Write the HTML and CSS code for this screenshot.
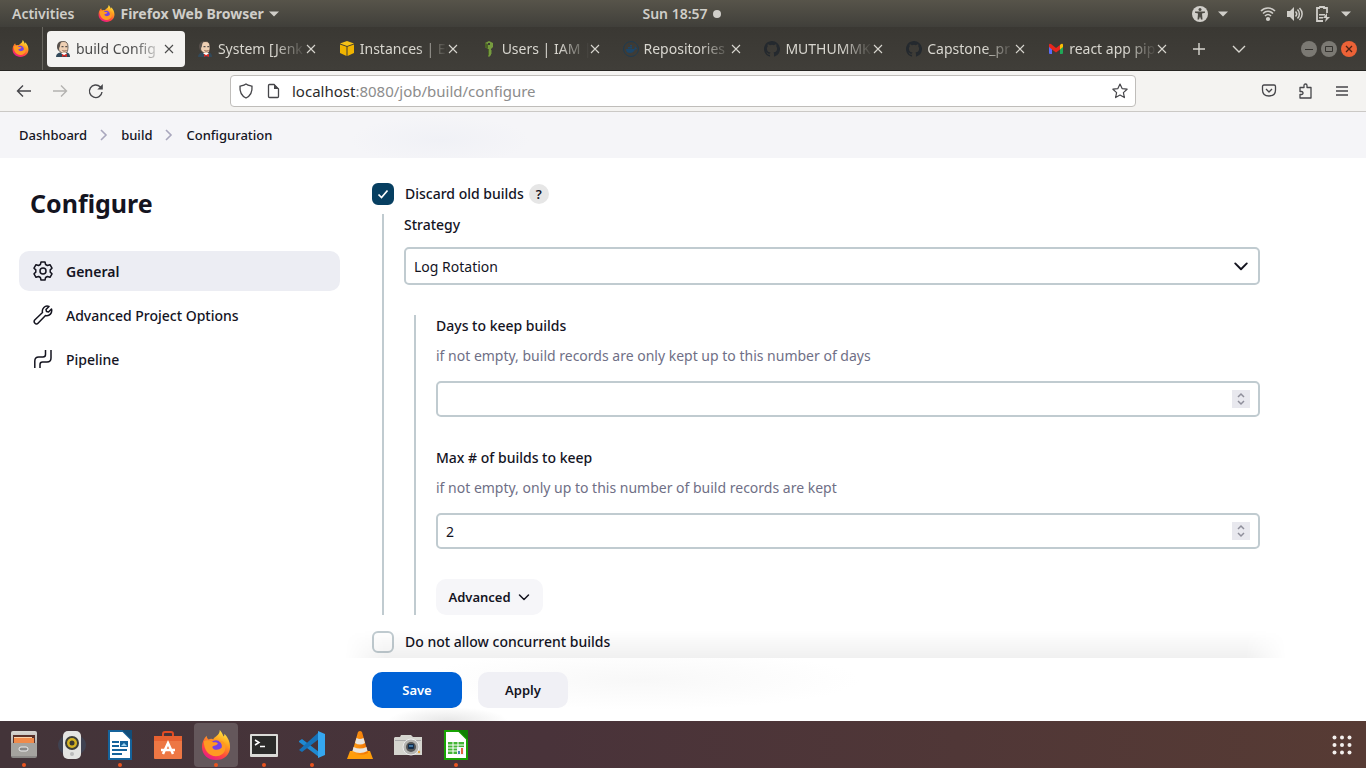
FILE: index.html
```html
<!DOCTYPE html>
<html lang="en">
<head>
<meta charset="utf-8">
<title>build Config [Jenkins]</title>
<link rel="stylesheet" href="styles.css">
</head>
<body>
<svg class="defs" aria-hidden="true">
  <defs>
    <linearGradient id="flame" x1="0.8" y1="0" x2="0.3" y2="1"><stop offset="0" stop-color="#fff04a"/><stop offset=".35" stop-color="#ffa51e"/><stop offset=".7" stop-color="#ff4a3c"/><stop offset="1" stop-color="#e8188a"/></linearGradient>
    <linearGradient id="cabinet" x1="0" y1="0" x2="0" y2="1"><stop offset="0" stop-color="#d8d6d2"/><stop offset="1" stop-color="#888684"/></linearGradient>
    <linearGradient id="orangeCone" x1="0" y1="0" x2="1" y2="0"><stop offset="0" stop-color="#ffa019"/><stop offset="1" stop-color="#f07000"/></linearGradient>
    <symbol id="firefox" viewBox="0 0 32 32">
      <path fill="url(#flame)" d="M20 0c2 2 3 4 4 7 1-1 1-2 1-3 4 4 6 9 6 14 0 8-6.500 14-15 14S1 26 1 18c0-5 2-9 5-12 0 2 1 3 2 4 2-1 4-1 5 0 1-3 7-4 7-10z"/>
      <circle cx="16" cy="18" r="7" fill="#7542e5"/>
      <path fill="#ff9a22" d="M3 12c3-2 7-1 10 1 2 0 4 0 5 1-1 3-5 2-6 4 1 4 7 4 10 1 1-4-1-6-4-8 5 0 9 3 8 9-1 5-5 8-10 8C8 28 3 21 3 12z"/>
    </symbol>
    <symbol id="jenkins" viewBox="0 0 16 16">
      <path fill="#32495a" d="M1 16c0-3 2-4.500 5-4.500h5c3 0 4 2 4 4.500z"/>
      <path fill="#efd0b4" stroke="#3a302c" stroke-width=".7" d="M4 4c0-3 2-3.500 5-3.500S13 3 13 6c0 4-1 6.500-4 6.500S4 10 3.500 8C2.500 7 3 6 4 6z"/>
      <path fill="#57504c" d="M3.500 10C2 8 1.500 5 2.500 3 3.500 1 5 .3 7.500.3 5 1.500 5.500 4 4.500 6zM6.500 5h2v1.300h-2zM10.300 5h2v1.300h-2z"/>
      <path fill="none" stroke="#7b4d3d" d="M7.500 9.500c1 .8 2.500.8 4 0"/>
      <path fill="#fff" d="M6 12l3 3 3-3z"/>
      <path fill="#d82a25" d="M7 13l2 1 3-1v3l-3-1-2 1z"/>
    </symbol>
    <symbol id="github" viewBox="0 0 16 16"><path fill="#24292e" d="M8 0C3.580 0 0 3.580 0 8c0 3.540 2.290 6.530 5.470 7.590.4.070.55-.17.55-.38v-1.500c-2.200.5-2.700-.9-2.700-.9-.36-.92-.9-1.200-.9-1.200-.72-.5.060-.48.060-.48.8.06 1.220.82 1.220.82.71 1.220 1.870.87 2.330.66.070-.52.280-.87.500-1.070-1.770-.2-3.640-.9-3.640-3.950 0-.9.310-1.600.82-2.150-.1-.2-.36-1 .08-2.120 0 0 .67-.21 2.200.82a7.600 7.600 0 0 1 4 0c1.530-1.040 2.200-.82 2.200-.82.440 1.100.160 1.900.080 2.120.510.560.820 1.270.820 2.150 0 3.070-1.870 3.750-3.650 3.950.290.250.540.730.540 1.480v2.200c0 .2.150.46.550.38A8 8 0 0 0 8 0z"/></symbol>
    <symbol id="close" viewBox="0 0 10 10"><path d="M1 1l8 8M9 1L1 9" fill="none" stroke="currentColor" stroke-width="1.100"/></symbol>
    <symbol id="caret" viewBox="0 0 10 6"><path d="M0 .5h10L5 5.500z" fill="currentColor"/></symbol>
    <symbol id="chevron" viewBox="0 0 14 14"><path d="M2.500 5L7 9.500 11.500 5" fill="none" stroke="currentColor" stroke-width="1.500" stroke-linecap="round" stroke-linejoin="round"/></symbol>
    <symbol id="crumb" viewBox="0 0 10 14"><path d="M2 2l5 5-5 5" fill="none" stroke="#a9a7bd" stroke-width="1.600"/></symbol>
    <symbol id="spin" viewBox="0 0 18 18"><path d="M6 7l3-3 3 3M6 11l3 3 3-3" fill="none" stroke="#8f8f9b" stroke-width="1.500"/></symbol>
  </defs>
</svg>

<header class="panel">
  <div class="panel-side">
    <button class="panel-item">Activities</button>
    <button class="panel-item app-menu"><svg width="17" height="17"><use href="#firefox"/></svg>Firefox Web Browser<svg width="10" height="6"><use href="#caret"/></svg></button>
  </div>
  <button class="panel-item clock">Sun 18:57<span class="dot"></span></button>
  <div class="panel-side status">
    <svg width="16" height="16" viewBox="0 0 16 16"><circle cx="8" cy="8" r="8" fill="#d0cec9"/><circle cx="8" cy="3.500" r="1.500" fill="#4b4943"/><path d="M3 5.500l10 0v1.300l-3 .6.500 6H9L8 10.500 7 13.500H5.500l.5-6-3-.7z" fill="#4b4943"/></svg>
    <svg width="10" height="6"><use href="#caret"/></svg>
    <svg class="wifi" width="16" height="16" viewBox="0 0 16 16" fill="none" stroke="#d0cec9" stroke-width="1.600"><path d="M1 5c4-4 10-4 14 0M3 7.500c3-3 7-3 10 0M5 10c2-2 4-2 6 0"/><circle cx="8" cy="13" r="1.300" fill="#d0cec9"/></svg>
    <svg class="sound" width="17" height="16" viewBox="0 0 17 16" fill="none" stroke="#d0cec9" stroke-width="1.500"><path fill="#d0cec9" stroke="none" d="M1 5h3l4-4v14l-4-4H1z"/><path d="M9.500 5.500c1.500 1.500 1.500 3.500 0 5M11.500 3.500c2.500 2.500 2.500 6.500 0 9M13.500 2c3.500 3.500 3.500 8.500 0 12"/></svg>
    <svg class="battery" width="16" height="16" viewBox="0 0 16 16"><path d="M5 2V1h4v1h3v5M8 15H2V2h3" fill="none" stroke="#d0cec9" stroke-width="1.800"/><path d="M4 8h6v1.500H4zM4 11h4v1.500H4zM12 7l-4 5h3l-1 4 5-5h-3z" fill="#d0cec9"/></svg>
    <svg width="10" height="6"><use href="#caret"/></svg>
  </div>
</header>

<nav class="tabbar" aria-label="Tabs">
  <div class="pinned"><svg width="17" height="17"><use href="#firefox"/></svg></div>
  <div class="tabs">
    <div class="tab active"><svg width="16" height="16"><use href="#jenkins"/></svg><span>build Config</span><button aria-label="Close tab"><svg width="10" height="10"><use href="#close"/></svg></button></div>
    <div class="tab"><svg width="16" height="16"><use href="#jenkins"/></svg><span>System [Jenk</span><button aria-label="Close tab"><svg width="10" height="10"><use href="#close"/></svg></button></div>
    <div class="tab"><svg width="16" height="16" viewBox="0 0 16 16"><path fill="#f5c218" d="M8 0l7 2.500L8 5 1 2.500z"/><path fill="#f0b400" d="M1 3.500l6.500 2.300V15L1 12zM15 3.500L8.500 5.800V15L15 12z"/></svg><span>Instances | EC</span><button aria-label="Close tab"><svg width="10" height="10"><use href="#close"/></svg></button></div>
    <div class="tab"><svg width="16" height="16" viewBox="0 0 16 16"><path fill="#769b3f" fill-rule="evenodd" d="M4 2l4-2 4 2v4l-2 2v1l1 1-1 1 1 1-1 1v1l-2 2-1-1V8L4 6zm3 0v2h2V2z"/><path fill="#4b6225" d="M4 2l3 1v5L4 6zM8 8v7l-1-1V8z"/></svg><span>Users | IAM |</span><button aria-label="Close tab"><svg width="10" height="10"><use href="#close"/></svg></button></div>
    <div class="tab"><svg width="16" height="16" viewBox="0 0 16 16"><circle cx="8" cy="8" r="7.500" fill="none" stroke="#203b50"/><path fill="#1d4668" d="M3 8h8c1-1 1-2 .5-3 1 .5 1.500 1 1.500 2h1c0 1-1 1.500-2 1.500C11 11 9 12 7 12S3 11 3 8zM5 6h4v1.500H5zM7 4h2v1.500H7z"/></svg><span>Repositories</span><button aria-label="Close tab"><svg width="10" height="10"><use href="#close"/></svg></button></div>
    <div class="tab"><svg width="16" height="16"><use href="#github"/></svg><span>MUTHUMMK</span><button aria-label="Close tab"><svg width="10" height="10"><use href="#close"/></svg></button></div>
    <div class="tab"><svg width="16" height="16"><use href="#github"/></svg><span>Capstone_pr</span><button aria-label="Close tab"><svg width="10" height="10"><use href="#close"/></svg></button></div>
    <div class="tab"><svg width="16" height="16" viewBox="0 0 16 16"><path fill="#5a6cf5" d="M1 5l3 2v6H2q-1 0-1-1z"/><path fill="#20a757" d="M15 5l-3 2v6h2q1 0 1-1z"/><path fill="#fbbc04" d="M12 4l1-1q2-1 2 1v2l-3 2.500z"/><path fill="#e8261c" d="M1 4q0-2 2-1l5 4 4-3v4.500L8 11.500 4 8.500 1 6z"/></svg><span>react app pip</span><button aria-label="Close tab"><svg width="10" height="10"><use href="#close"/></svg></button></div>
  </div>
  <button class="tab-tool" aria-label="New tab"><svg width="12" height="12" viewBox="0 0 12 12"><path d="M6 0v12M0 6h12" stroke="currentColor" stroke-width="1.400"/></svg></button>
  <button class="tab-tool tab-list" aria-label="List all tabs"><svg width="14" height="8" viewBox="0 0 14 8"><path d="M1 1l6 6 6-6" fill="none" stroke="currentColor" stroke-width="1.400"/></svg></button>
  <div class="window-controls">
    <button aria-label="Minimize"><svg width="8" height="8" viewBox="0 0 8 8"><path d="M0 4.500h8" stroke="#35332f"/></svg></button>
    <button aria-label="Maximize"><svg width="8" height="8" viewBox="0 0 8 8"><path d="M.5 1.500h7v5h-7z" fill="none" stroke="#35332f"/></svg></button>
    <button class="quit" aria-label="Close"><svg width="8" height="8" viewBox="0 0 8 8"><path d="M1 1l6 6M7 1L1 7" stroke="#4c2315" stroke-width="1.300"/></svg></button>
  </div>
</nav>

<div class="toolbar">
  <div class="nav-buttons">
    <button aria-label="Back"><svg width="16" height="16" viewBox="0 0 16 16"><path d="M15 8H2M7 2.500L1.500 8 7 13.500" fill="none" stroke="currentColor" stroke-width="1.400"/></svg></button>
    <button class="disabled" aria-label="Forward"><svg width="16" height="16" viewBox="0 0 16 16"><path d="M1 8h13M9 2.500L14.500 8 9 13.500" fill="none" stroke="currentColor" stroke-width="1.400"/></svg></button>
    <button aria-label="Reload"><svg width="16" height="16" viewBox="0 0 16 16"><path d="M14 9a6.300 6.300 0 1 1-1.800-5.200l1.300 1.400" fill="none" stroke="currentColor" stroke-width="1.400"/><path d="M14.800 1v5.500H9.300z" fill="currentColor"/></svg></button>
  </div>
  <div class="urlbar">
    <svg width="16" height="16" viewBox="0 0 16 16"><path d="M8 1c2 1.500 4 1.700 6 2.200C14.500 9 12 13 8 15 4 13 1.500 9 2 3.200 4 2.700 6 2.500 8 1z" fill="none" stroke="currentColor" stroke-width="1.300"/></svg>
    <svg width="16" height="16" viewBox="0 0 16 16"><path d="M9 1.500H4.500q-1 0-1 1v11q0 1 1 1h8q1 0 1-1V6z" fill="none" stroke="currentColor" stroke-width="1.300"/><path d="M9 1l5 5H9z" fill="currentColor"/></svg>
    <a class="url" href="#"><b>localhost</b>:8080/job/build/configure</a>
    <button aria-label="Bookmark"><svg width="16" height="16" viewBox="0 0 16 16"><path d="M8 1l2.100 4.600 5 .6-3.700 3.400 1 5L8 12.100l-4.400 2.500 1-5L.9 6.200l5-.6z" fill="none" stroke="currentColor" stroke-width="1.200" stroke-linejoin="round"/></svg></button>
  </div>
  <div class="tool-buttons">
    <button aria-label="Save to Pocket"><svg width="16" height="16" viewBox="0 0 16 16" fill="none" stroke="currentColor" stroke-width="1.300"><path d="M3 2h10q1.500 0 1.500 1.500V7q0 6-6.500 6T1.500 7V3.500Q1.500 2 3 2zM5 6l3 3 3-3" stroke-linejoin="round"/></svg></button>
    <button aria-label="Extensions"><svg width="16" height="16" viewBox="0 0 16 16"><path d="M2 4.500h4V2.500q0-1.500 1.500-1.500T9 2.500v2h4V15H2v-3.500h1.500Q5 11.500 5 10T3.500 8.500H2z" fill="none" stroke="currentColor" stroke-width="1.300" stroke-linejoin="round"/></svg></button>
    <button aria-label="Menu"><svg width="14" height="14" viewBox="0 0 14 14"><path d="M1 3h12M1 7h12M1 11h12" stroke="currentColor" stroke-width="1.400"/></svg></button>
  </div>
</div>

<div class="page">
  <nav class="breadcrumbs" aria-label="Breadcrumb">
    <a href="#">Dashboard</a><svg width="10" height="14"><use href="#crumb"/></svg><a href="#">build</a><svg width="10" height="14"><use href="#crumb"/></svg><a href="#">Configuration</a>
  </nav>
  <div class="columns">
    <aside class="sidebar">
      <h1>Configure</h1>
      <nav>
        <a class="current" href="#"><svg width="20" height="20" viewBox="0 0 20 20" fill="none" stroke="currentColor" stroke-width="1.500" stroke-linejoin="round"><path d="M8 1h4l.6 2.500 1.800 1L17 3.700l2 3.500-1.800 1.700v2.200L19 12.800l-2 3.500-2.600-.8-1.800 1L12 19H8l-.6-2.500-1.800-1-2.600.8-2-3.500 1.800-1.700V8.900L1 7.200l2-3.500 2.600.8 1.800-1z"/><circle cx="10" cy="10" r="3"/></svg>General</a>
        <a href="#"><svg width="20" height="20" viewBox="0 0 20 20" fill="none" stroke="currentColor" stroke-width="1.500" stroke-linejoin="round"><path d="M16 1.500l-3 3 .5 2 2 .5 3-3c1 4-2 7.500-6 6.500L5 18.300c-2 2-5-1-3.300-3.300L9.500 7.500C8.500 3.500 12 0 16 1.500z"/></svg>Advanced Project Options</a>
        <a href="#"><svg width="20" height="20" viewBox="0 0 20 20" fill="none" stroke="currentColor" stroke-width="1.500"><path d="M1.800 19v-7q0-4 4-4H10q2.500 0 2.500-2.500V1M7 19v-3.500q0-2.500 2.500-2.500H14q4 0 4-4V1"/></svg>Pipeline</a>
      </nav>
    </aside>
    <main>
      <form>
        <div class="check-row"><input type="checkbox" id="discard" checked><label for="discard">Discard old builds</label><button type="button" class="help" aria-label="Help">?</button></div>
        <div class="nested">
          <label for="strategy">Strategy</label>
          <div class="field select"><select id="strategy"><option>Log Rotation</option></select><svg width="18" height="18"><use href="#chevron"/></svg></div>
          <div class="nested">
            <label for="days">Days to keep builds</label>
            <p>if not empty, build records are only kept up to this number of days</p>
            <div class="field"><input type="number" id="days"><svg width="18" height="18"><use href="#spin"/></svg></div>
            <label for="max">Max # of builds to keep</label>
            <p>if not empty, only up to this number of build records are kept</p>
            <div class="field"><input type="number" id="max" value="2"><svg width="18" height="18"><use href="#spin"/></svg></div>
            <button type="button" class="btn advanced">Advanced<svg width="14" height="14"><use href="#chevron"/></svg></button>
          </div>
        </div>
        <div class="check-row"><input type="checkbox" id="concurrent"><label for="concurrent">Do not allow concurrent builds</label></div>
      </form>
      <footer>
        <button class="btn primary">Save</button>
        <button class="btn apply">Apply</button>
      </footer>
    </main>
  </div>
</div>

<nav class="dock" aria-label="Dock">
  <button class="running" aria-label="Files"><svg width="30" height="30" viewBox="0 0 30 30"><rect x="2" y="1" width="26" height="27" rx="2" fill="url(#cabinet)"/><path fill="#59312a" d="M4 5h22v8H4z"/><path fill="#f08a4a" d="M5 8h20v5H5z"/><path fill="#f9d1a9" d="M5 7h18v1H5z"/><path fill="#a5a39f" d="M2 13h26v13H2z"/><rect x="10" y="17" width="9" height="4" rx="2" fill="#888" stroke="#eee"/></svg></button>
  <button aria-label="Rhythmbox"><svg width="30" height="30" viewBox="0 0 30 30"><ellipse cx="15" cy="15" rx="14" ry="11" fill="#404251"/><rect x="6" y="1" width="18" height="28" rx="5" fill="#e4e4e2"/><circle cx="15" cy="13" r="7" fill="#3d3d38"/><circle cx="15" cy="13" r="5" fill="#d5b322"/><circle cx="15" cy="13" r="2.500" fill="#3b3932"/><circle cx="15" cy="24" r="2" fill="#bbb"/></svg></button>
  <button class="running" aria-label="Writer"><svg width="30" height="30" viewBox="0 0 30 30"><path d="M4 1h14l8 8v20H4z" fill="#fff" stroke="#15639b" stroke-width="2"/><path d="M17 0h10v10z" fill="#124d78"/><path d="M7 12h7M7 16h7M7 20h15M7 24h10" stroke="#15639b" stroke-width="2"/><path d="M15 11h8v6h-8z" fill="#15639b"/><path d="M16 16l3-3 3 3z" fill="#9fd3ef"/></svg></button>
  <button aria-label="Software"><svg width="30" height="30" viewBox="0 0 30 30"><path d="M10 8V4q0-2 2-2h6q2 0 2 2v4" fill="none" stroke="#e24b23" stroke-width="2"/><path d="M1 6h28v22q0 1-1 1H2q-1 0-1-1z" fill="#ed7744"/><path d="M1 6h28v5H1z" fill="#e76131"/><path d="M10 24l5-11 5 11M8 20h14" fill="none" stroke="#fff" stroke-width="2.500"/></svg></button>
  <button class="running focused" aria-label="Firefox"><svg width="30" height="30"><use href="#firefox"/></svg></button>
  <button class="running" aria-label="Terminal"><svg width="30" height="30" viewBox="0 0 30 30"><rect x="1" y="4" width="28" height="23" rx="1" fill="#dbdbd8"/><rect x="3" y="6" width="24" height="18" fill="#2b2b2a"/><path d="M6 10l4 2.500-4 2.500M11 16.500h5" fill="none" stroke="#fff" stroke-width="1.500"/></svg></button>
  <button class="running" aria-label="Visual Studio Code"><svg width="30" height="30" viewBox="0 0 30 30"><path d="M2 11l3-2 17 13v5L2 12z" fill="#1f8ad2"/><path d="M2 20l3 2L22 9V2z" fill="#1672b8"/><path d="M21 1l7 3v21l-7 3z" fill="#35a7f0"/></svg></button>
  <button aria-label="VLC"><svg width="30" height="30" viewBox="0 0 30 30"><path d="M5 21h20l3 8H2z" fill="#ff9d0a"/><path d="M13 2q2-2 4 0l6 21q-8 4-16 0z" fill="url(#orangeCone)"/><path d="M11.500 8q3.500 2 7 0l1.500 5q-5 3-10 0zM8.500 17q6.500 3 13 0l1 4q-7.500 4-15 0z" fill="#e8e5df"/></svg></button>
  <button aria-label="Shotwell"><svg width="30" height="30" viewBox="0 0 30 30"><path d="M2 7h5l1-2h10l2 2h9v18H1V8z" fill="#d5d5cf"/><path d="M2 10h26v1H2z" fill="#aaa"/><circle cx="18" cy="17" r="8" fill="#b5b5b2" stroke="#eee"/><circle cx="18" cy="17" r="5" fill="#555"/><rect x="15" y="14" width="6" height="5" rx="1" fill="#122c4b"/><path d="M16 15h4v2h-4z" fill="#40739d"/><circle cx="26" cy="22" r="1.200" fill="#e9a538"/></svg></button>
  <button class="running" aria-label="Calc"><svg width="30" height="30" viewBox="0 0 30 30"><path d="M4 1h14l8 8v20H4z" fill="#fff" stroke="#18a303" stroke-width="2"/><path d="M17 0h10v10z" fill="#0e8002"/><path d="M7 12h16v12H7z" fill="#42b535"/><path d="M7 15h16M7 18h9M7 21h9M12 12v12M17 12v5" stroke="#fff"/><path d="M16 17h7v8h-7z" fill="#eef5f8"/><path d="M17 24v-3h2v3z" fill="#487eb0"/><path d="M20 24v-6h2v6z" fill="#e0653a"/></svg></button>
  <button class="apps" aria-label="Show applications"><svg width="20" height="20" viewBox="0 0 20 20" fill="#f4f0ee"><circle cx="2.500" cy="2.500" r="2"/><circle cx="10" cy="2.500" r="2"/><circle cx="17.500" cy="2.500" r="2"/><circle cx="2.500" cy="10" r="2"/><circle cx="10" cy="10" r="2"/><circle cx="17.500" cy="10" r="2"/><circle cx="2.500" cy="17.500" r="2"/><circle cx="10" cy="17.500" r="2"/><circle cx="17.500" cy="17.500" r="2"/></svg></button>
</nav>
</body>
</html>
```
FILE: styles.css
```css
* { box-sizing: border-box; }
body {
  margin: 0;
  min-height: 100vh;
  display: flex;
  flex-direction: column;
  font-family: "Noto Sans", "Open Sans", sans-serif;
  font-size: 14px;
  color: #14141f;
  background: #fff;
}
button { font: inherit; color: inherit; border: 0; background: none; padding: 0; }
a { color: inherit; text-decoration: none; }
svg { display: block; flex: none; }
.defs { position: absolute; width: 0; height: 0; }

/* Desktop panel */
.panel {
  display: flex;
  align-items: center;
  height: 27px;
  padding: 0 15px 0 12px;
  color: #d0cec9;
  font-size: 14px;
  font-weight: 600;
  line-height: 20px;
  background: linear-gradient(#57544a, #403f3a);
}
.panel-side { flex: 1; display: flex; align-items: center; gap: 24px; }
.app-menu { font-weight: 700; }
.panel-item { display: flex; align-items: center; gap: 5px; white-space: nowrap; }
.dot { width: 8px; height: 8px; border-radius: 50%; background: currentColor; }
.status { justify-content: flex-end; gap: 10px; }
.wifi { margin-left: 22px; }
.battery { margin-left: 2px; }

/* Browser tabs */
.tabbar {
  display: flex;
  align-items: center;
  height: 44px;
  color: #d8d6cf;
  background: linear-gradient(#3a3833, #403e39);
  border-bottom: 1px solid #262522;
}
.pinned { width: 43px; align-self: stretch; display: flex; align-items: center; padding-left: 12px; border-right: 1px solid #68665f; }
.tabs { flex: 1; display: flex; gap: 4px; margin: 0 3px 0 4px; min-width: 0; }
.tab { flex: 1; min-width: 0; height: 36px; display: flex; align-items: center; padding: 0 11px 0 8px; border-radius: 4px; font-size: 14px; }
.tab span {
  flex: 1;
  margin-left: 5px;
  overflow: hidden;
  white-space: nowrap;
  -webkit-mask-image: linear-gradient(90deg, #000 65%, transparent);
  mask-image: linear-gradient(90deg, #000 65%, transparent);
}
.tab.active { color: #4b4b4b; background: #f4f3f1; }
.tab-tool { width: 36px; display: flex; justify-content: center; }
.tab-list { width: 44px; }
.window-controls { display: flex; gap: 4px; margin: 0 9px 0 40px; }
.window-controls button { width: 16px; height: 16px; border-radius: 50%; display: flex; align-items: center; justify-content: center; background: #7b7973; }
.window-controls .quit { background: #ec6237; }

/* Address bar */
.toolbar { display: flex; align-items: center; height: 41px; color: #46464a; background: #f4f3f1; border-bottom: 1px solid #cbc9c6; }
.nav-buttons { width: 230px; display: flex; gap: 20px; padding-left: 16px; }
.disabled { color: #b3b2b0; }
.urlbar { flex: 1; min-width: 0; height: 32px; display: flex; align-items: center; gap: 11px; padding: 0 7px; background: #fff; border: 1px solid #bfbdba; border-radius: 4px; }
.url { flex: 1; font-size: 15px; color: #8c8c8c; }
.url b { font-weight: 400; color: #2b2b2b; }
.tool-buttons { width: 230px; display: flex; align-items: center; justify-content: flex-end; gap: 21px; padding-right: 17px; }

/* Page */
.page { flex: 1; display: flex; flex-direction: column; }
.breadcrumbs {
  height: 46px;
  display: flex;
  align-items: center;
  gap: 12px;
  padding: 0 19px;
  font-size: 13px;
  font-weight: 500;
  background: radial-gradient(ellipse 90px 24px at 440px 28px, #f0f1f6, transparent), #f5f5f8;
}
.columns { flex: 1; display: flex; }
.sidebar { width: 340px; padding: 25px 0 0 19px; }
h1 { margin: 0 0 28px 11px; font-size: 25px; line-height: 40px; font-weight: 700; }
.sidebar nav { display: grid; gap: 4px; }
.sidebar a { height: 40px; display: flex; align-items: center; gap: 13px; padding-left: 14px; border-radius: 10px; font-weight: 500; }
.sidebar .current { font-weight: 600; background: #ecedf3; }
main { flex: 1; display: flex; flex-direction: column; }
form { flex: 1; padding: 25px 106px 5px 32px; position: relative; }
form::after {
  content: "";
  position: absolute;
  inset: auto 80px 0 5px;
  height: 28px;
  background: linear-gradient(transparent, #0000000f);
  -webkit-mask-image: linear-gradient(90deg, transparent, #000 40px calc(100% - 40px), transparent);
  mask-image: linear-gradient(90deg, transparent, #000 40px calc(100% - 40px), transparent);
  pointer-events: none;
}
label { font-weight: 500; line-height: 22px; }
.check-row { display: flex; align-items: center; height: 22px; }
.check-row label { margin-left: 11px; }
.check-row input { appearance: none; width: 22px; height: 22px; margin: 0; border: 2px solid #c0cbd0; border-radius: 6px; background: #fff; }
.check-row input:checked {
  border-color: #073f61;
  background: #073f61 url("data:image/svg+xml,%3Csvg xmlns='http://www.w3.org/2000/svg' viewBox='0 0 18 18'%3E%3Cpath d='M4.500 9.500L7.500 12.500 13.500 5.500' fill='none' stroke='white' stroke-width='1.700'/%3E%3C/svg%3E");
}
.help { width: 20px; height: 20px; margin-left: 5px; border-radius: 50%; background: #e6e6e6; font-size: 13px; font-weight: 600; line-height: 20px; }
.nested { border-left: 2px solid #c0cbd0; padding-left: 20px; }
.nested label { display: block; }
form > .nested { margin: 9px 0 16px 10px; }
.nested .nested { margin: 30px 0 0 10px; }
.nested p { margin: 8px 0 14px; line-height: 22px; color: #6f6f86; }
.field { position: relative; }
.field input, .field select {
  display: block;
  appearance: none;
  -moz-appearance: textfield;
  width: 100%;
  height: 36px;
  padding: 0 8px;
  font: inherit;
  color: inherit;
  background: #fff;
  border: 2px solid #c0cbd0;
  border-radius: 5px;
}
.field input::-webkit-inner-spin-button { display: none; }
.field select { height: 38px; }
.field svg { position: absolute; right: 10px; top: 9px; pointer-events: none; background: #e8e8ee; }
.select svg { top: 10px; background: none; }
.select { margin-top: 11px; }
.nested .nested .field { margin-bottom: 30px; }
.btn { height: 36px; display: flex; align-items: center; justify-content: center; border-radius: 10px; font-size: 13px; font-weight: 600; background: #f6f6f9; }
.advanced { width: 107px; gap: 6px; }
footer { height: 63px; display: flex; align-items: center; gap: 16px; padding: 0 32px; background: radial-gradient(ellipse 220px 30px at 300px 22px, #f8f8f8, transparent), radial-gradient(ellipse 60px 14px at 108px 63px, #e6e6e6, transparent), #fff; }
footer .btn { width: 90px; background: #f0f0f5; }
footer .primary { color: #fff; background: #0062d6; }

/* Dock */
.dock { height: 47px; display: flex; background: linear-gradient(90deg, #433439, #49333a 40%, #573b34); }
.dock button { width: 48px; display: flex; flex-direction: column; align-items: center; padding-top: 9px; }
.dock .running::after { content: ""; width: 4px; height: 4px; margin-top: 3px; border-radius: 50%; background: #e95420; }
.dock .focused { width: 44px; height: 44px; margin: 2px 2px 0; padding-top: 7px; border-radius: 4px; background: #64575b; }
.dock .apps { margin-left: auto; padding-top: 14px; }
```
